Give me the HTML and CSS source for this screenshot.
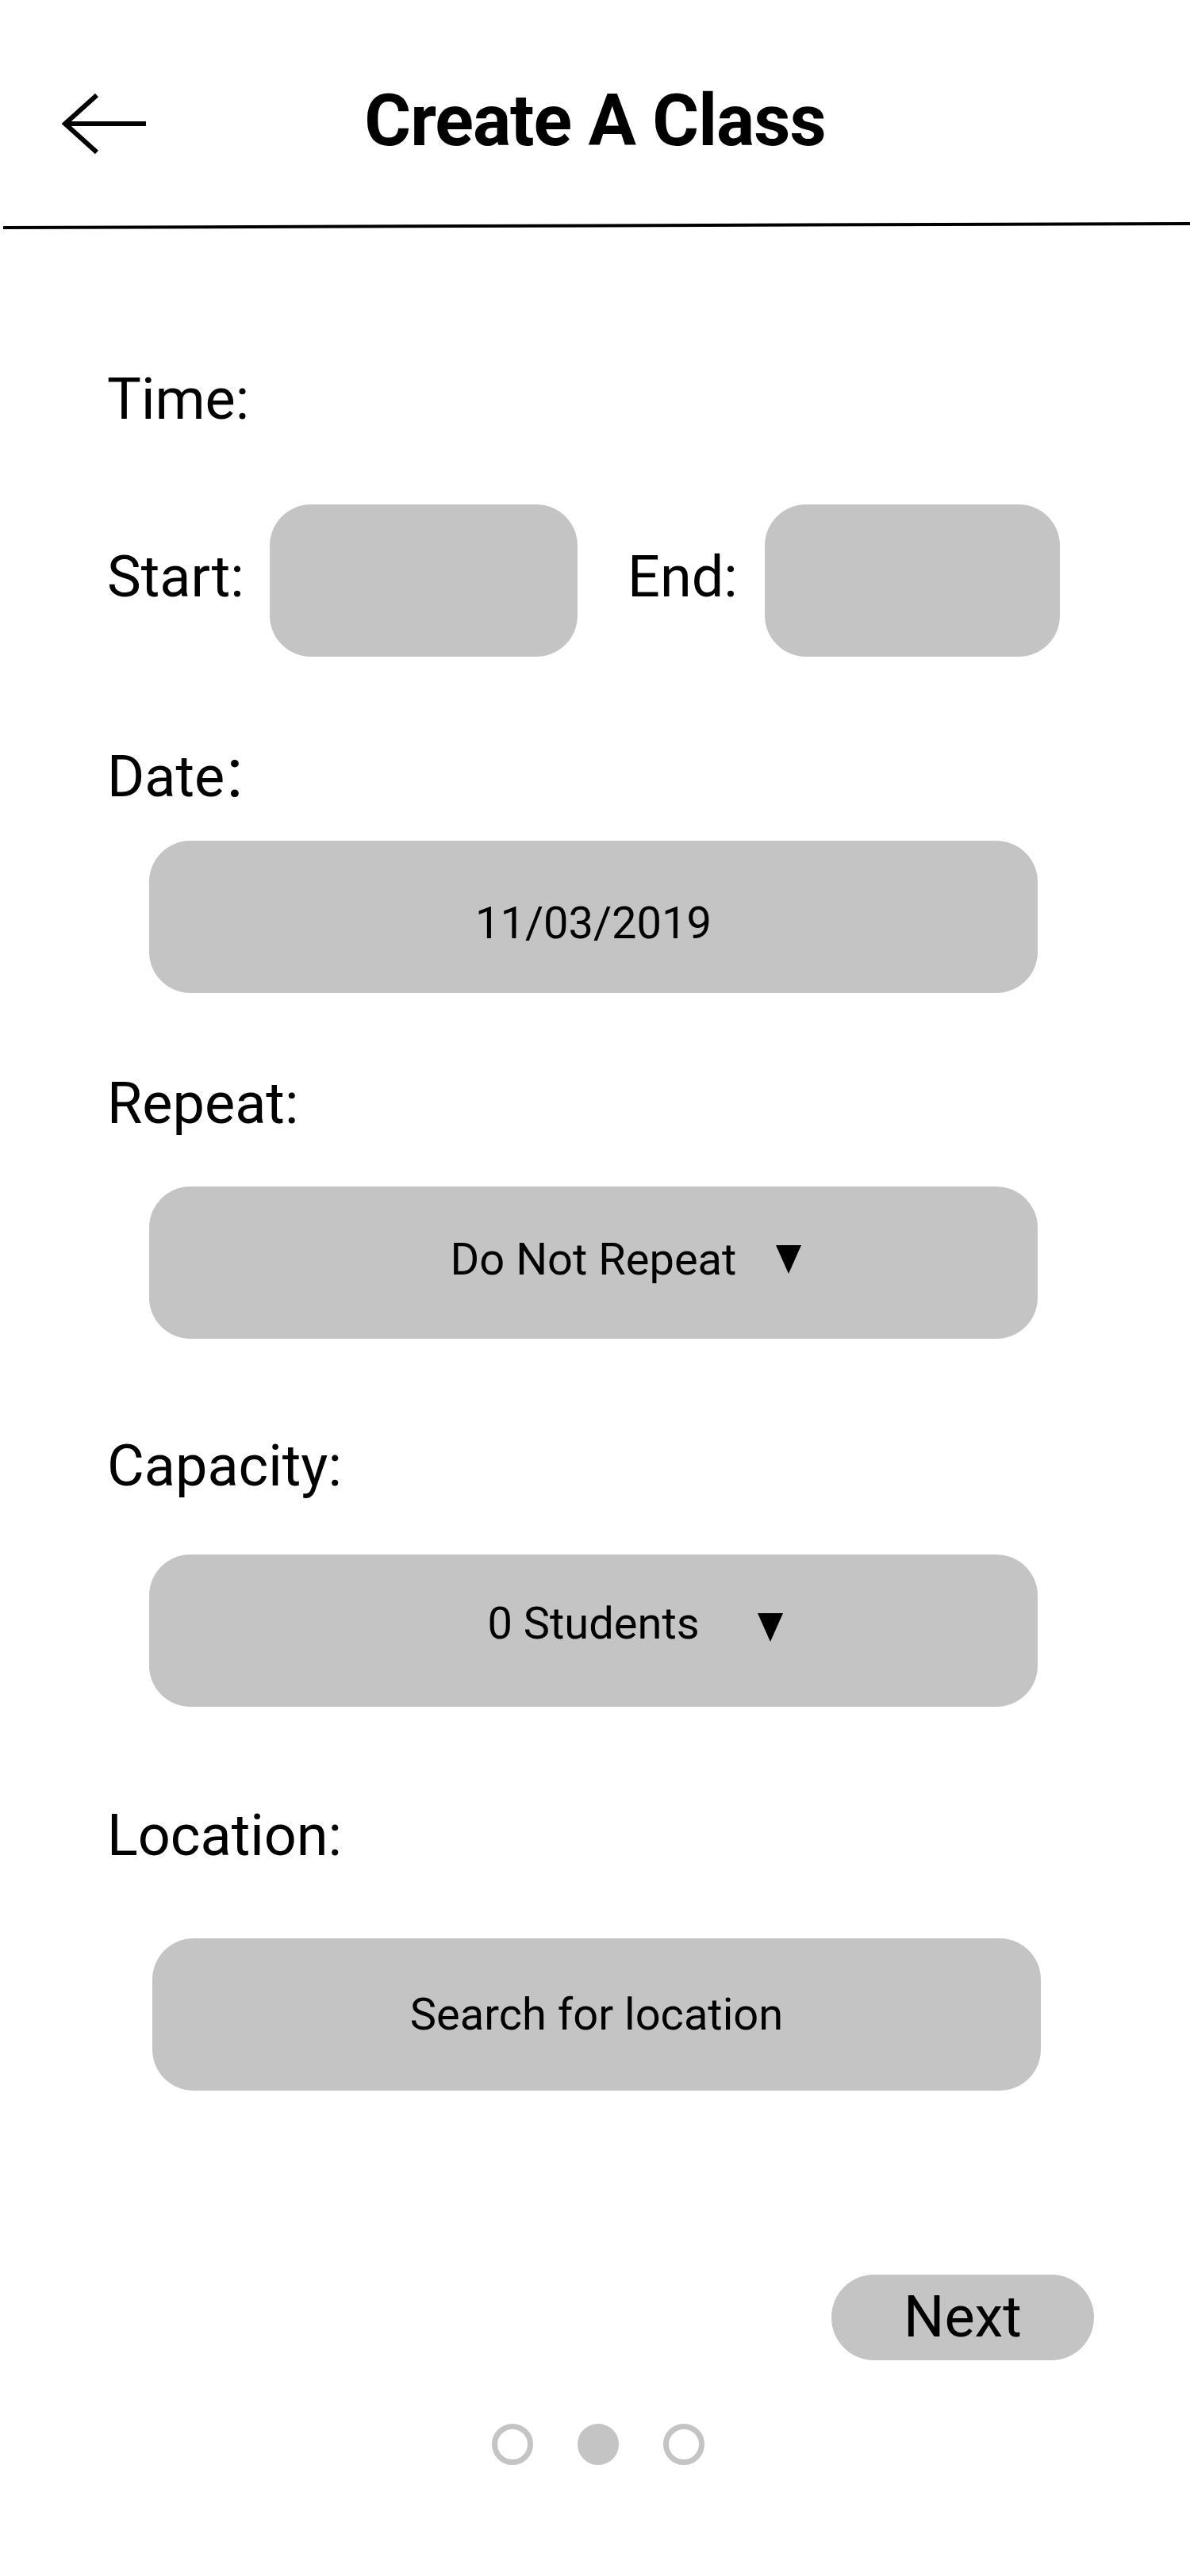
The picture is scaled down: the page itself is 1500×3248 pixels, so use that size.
FILE: index.html
```html
<!DOCTYPE html>
<html lang="en">
<head>
<meta charset="utf-8">
<title>Create A Class</title>
<link rel="stylesheet" href="styles.css">
</head>
<body>
<div class="screen">
  <header class="topbar">
    <span class="back" aria-label="Back">
      <svg width="110" height="80" viewBox="0 0 110 80"><path d="M46 4 L6 40 L46 76 M6 40 H108" fill="none" stroke="#000" stroke-width="6"/></svg>
    </span>
    <h1 class="title">Create A Class</h1>
    <span></span>
  </header>
  <svg class="divider" width="1500" height="10" viewBox="0 0 1500 10"><line x1="4" y1="7" x2="1500" y2="2" stroke="#000" stroke-width="4"/></svg>

  <main class="form">
    <div class="label label-time">Time:</div>
    <div class="time-row">
      <div class="label">Start:</div>
      <div class="box box-small"></div>
      <div class="label label-end">End:</div>
      <div class="box box-small"></div>
    </div>

    <div class="label label-date">Date<span class="big-colon">:</span></div>
    <div class="box box-wide box-date"><span class="value">11/03/2019</span></div>

    <div class="label label-repeat">Repeat:</div>
    <div class="box box-wide box-repeat"><span class="value with-caret caret-near">Do Not Repeat<svg class="caret" width="32" height="36" viewBox="0 0 32 36"><polygon points="0,0 32,0 16,36" fill="#000"/></svg></span></div>

    <div class="label label-capacity">Capacity:</div>
    <div class="box box-wide box-capacity"><span class="value with-caret caret-far">0 Students<svg class="caret" width="32" height="36" viewBox="0 0 32 36"><polygon points="0,0 32,0 16,36" fill="#000"/></svg></span></div>

    <div class="label label-location">Location:</div>
    <div class="box box-wide box-location"><span class="value">Search for location</span></div>
  </main>

  <div class="actions">
    <div class="next-btn">Next</div>
  </div>

  <div class="dots">
    <span class="dot"></span>
    <span class="dot dot-active"></span>
    <span class="dot"></span>
  </div>
</div>
</body>
</html>
```

FILE: styles.css
```css
html, body {
  margin: 0;
  padding: 0;
  background: #fff;
}

body {
  font-family: Roboto, "Liberation Sans", Arial, sans-serif;
  color: #000;
}

.screen {
  width: 1500px;
  min-height: 3248px;
  background: #fff;
}

/* header */
.topbar {
  display: grid;
  grid-template-columns: 1fr auto 1fr;
  align-items: center;
  padding-top: 108px;
}

.back {
  display: flex;
  padding-left: 76px;
  margin-top: 6px;
}

.back svg {
  display: block;
}

.title {
  margin: 0;
  font-size: 90px;
  line-height: 90px;
  font-weight: 700;
  letter-spacing: -1px;
  text-align: center;
}

.divider {
  display: block;
  margin-top: 82px;
}

/* form */
.form {
  display: flex;
  flex-direction: column;
  padding-left: 135px;
}

.label {
  font-size: 72px;
  line-height: 72px;
  font-weight: 400;
  white-space: nowrap;
}

.label-time { margin-top: 178px; }

.big-colon {
  font-size: 1.22em;
  line-height: 0;
  margin-left: 2px;
}

.time-row {
  display: grid;
  grid-template-columns: 205px 388px 236px 372px;
  align-items: center;
  margin-top: 96px;
}

.time-row .label {
  margin-bottom: 8px;
}

.label-end {
  padding-left: 63px;
}

.box {
  background: #c4c4c4;
  border-radius: 52px;
  height: 192px;
}

.box-wide {
  width: 1120px;
  margin-left: 53px;
  display: flex;
  align-items: center;
  justify-content: center;
  box-sizing: border-box;
}

.value {
  font-size: 56px;
  line-height: 56px;
  white-space: nowrap;
}

.with-caret {
  position: relative;
}

.caret {
  position: absolute;
  top: 10px;
}

.caret-near .caret { left: calc(100% + 50px); }
.caret-far .caret { left: calc(100% + 73px); top: 15px; }

.label-date { margin-top: 116px; }
.box-date { margin-top: 44px; padding-top: 16px; }

.label-repeat { margin-top: 104px; }
.box-repeat { margin-top: 68px; padding-bottom: 8px; }

.label-capacity { margin-top: 125px; }
.box-capacity { margin-top: 75px; padding-bottom: 18px; }

.label-location { margin-top: 127px; }
.box-location { margin-top: 93px; margin-left: 57px; }

/* actions */
.actions {
  display: flex;
  justify-content: flex-end;
  padding-right: 121px;
  margin-top: 232px;
}

.next-btn {
  width: 331px;
  height: 108px;
  border-radius: 54px;
  background: #c4c4c4;
  display: flex;
  align-items: center;
  justify-content: center;
  font-size: 72px;
  line-height: 72px;
}

.dots {
  display: flex;
  justify-content: center;
  gap: 56px;
  padding-left: 8px;
  margin-top: 80px;
}

.dot {
  width: 52px;
  height: 52px;
  box-sizing: border-box;
  border-radius: 50%;
  border: 7px solid #c4c4c4;
}

.dot-active {
  background: #c4c4c4;
}
```
